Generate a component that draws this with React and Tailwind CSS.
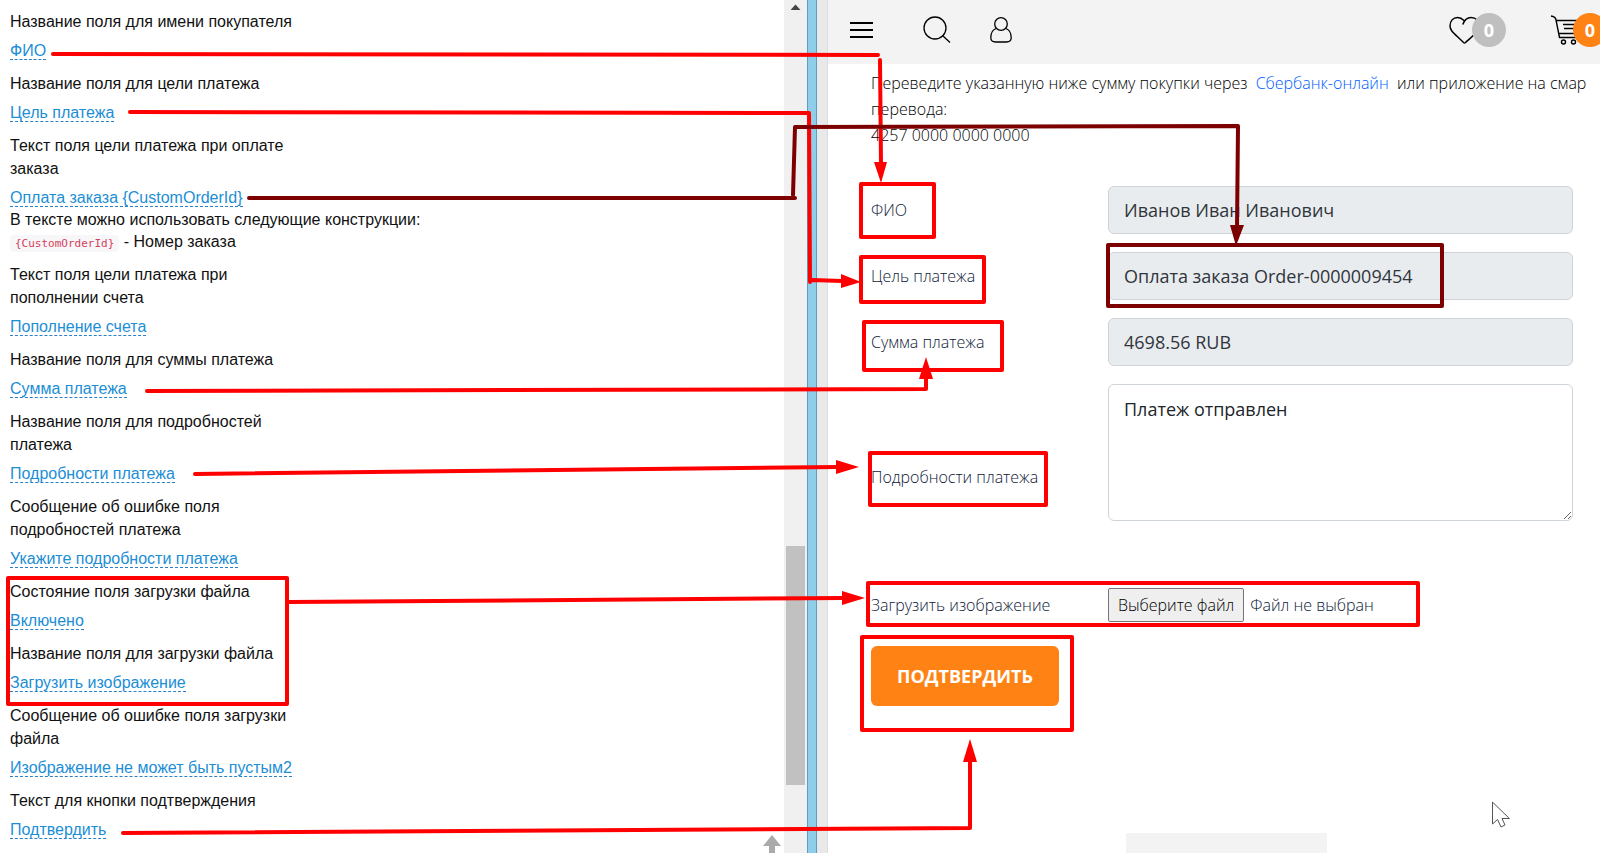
import React, { useRef } from "react"

const settings = [
  { label: "Название поля для имени покупателя", value: "ФИО" },
  { label: "Название поля для цели платежа", value: "Цель платежа" },
  { label: "Текст поля цели платежа при оплате заказа", value: "Оплата заказа {CustomOrderId}", hint: true },
  { label: "Текст поля цели платежа при пополнении счета", value: "Пополнение счета" },
  { label: "Название поля для суммы платежа", value: "Сумма платежа" },
  { label: "Название поля для подробностей платежа", value: "Подробности платежа" },
  { label: "Сообщение об ошибке поля подробностей платежа", value: "Укажите подробности платежа" },
  { label: "Состояние поля загрузки файла", value: "Включено" },
  { label: "Название поля для загрузки файла", value: "Загрузить изображение" },
  { label: "Сообщение об ошибке поля загрузки файла", value: "Изображение не может быть пустым2" },
  { label: "Текст для кнопки подтверждения", value: "Подтвердить" },
]

const SettingsPanel = () => (
  <section className="relative w-[49%] shrink-0 overflow-hidden bg-white pl-[10px] pt-[10px] font-['Liberation_Sans',Arial,sans-serif] text-base leading-[23px] text-[#111]">
    <dl>
      {settings.map(({ label, value, hint }) => (
        <div key={label} className="mb-[10px]">
          <dt className="mb-[6px] w-[300px]">{label}</dt>
          <dd>
            <a href="#" className="border-b border-dashed border-[#2b7fc4] text-[#1b8ed6]">{value}</a>
            {hint && (
              <p className="leading-[22px]">
                В тексте можно использовать следующие конструкции:<br />
                <code className="rounded bg-[#f7f7f9] px-[5px] py-[2px] font-['DejaVu_Sans_Mono',monospace] text-[11px] leading-none text-[#d8405a]">{"{CustomOrderId}"}</code> - Номер заказа
              </p>
            )}
          </dd>
        </div>
      ))}
    </dl>
    <a href="#" aria-label="Наверх" className="absolute bottom-0 right-[2px]">
      <svg width="20" height="18" viewBox="0 0 20 18" fill="#aaa"><path d="M10 0 19 11H13V18H7V11H1Z" /></svg>
    </a>
  </section>
)

const Divider = () => (
  <>
    <div className="relative w-[23px] shrink-0 bg-[#f0f0f0]">
      <svg className="absolute left-[6px] top-[4px]" width="11" height="7" viewBox="0 0 11 7" fill="#444"><path d="M5.500 .5 10.500 6H.5Z" /></svg>
      <div className="absolute left-[2px] top-[64%] h-[28%] w-[19px] bg-[#c1c1c1]" />
    </div>
    <div className="w-[10px] shrink-0 border-x border-[#5a9fc0] bg-[#8fcee9]" />
    <div className="w-[11px] shrink-0 border-r border-[#dcdcdc] bg-[#e9e9e9]" />
  </>
)

const Header = () => (
  <header className="flex h-16 items-center bg-[#f3f3f3] pl-[22px]">
    <nav className="flex items-center pb-1">
      <button type="button" aria-label="Меню">
        <svg width="23" height="16" stroke="#000" strokeWidth="2"><path d="M0 1H23M0 8H23M0 15H23" /></svg>
      </button>
      <button type="button" aria-label="Поиск" className="ml-[50px]">
        <svg width="28" height="28" fill="none" stroke="#000" strokeWidth="1.300"><circle cx="12" cy="12" r="11" /><path d="M19.500 19.500 27 26.500" /></svg>
      </button>
      <button type="button" aria-label="Профиль" className="ml-[39px]">
        <svg width="22" height="26" fill="none" stroke="#000" strokeWidth="1.300"><circle cx="11" cy="7" r="6.300" /><path d="M6 11.500C2 13 .8 17 .8 20.500Q.8 25 5.500 25H16.500Q21.200 25 21.200 20.500C21.200 17 20 13 16 11.500" /></svg>
      </button>
    </nav>
    <div className="-mr-[7px] ml-auto flex items-center gap-11 pb-1">
      <button type="button" aria-label="Избранное" className="flex items-center">
        <svg width="32" height="28" fill="none" stroke="#000" strokeWidth="1.500" strokeLinecap="round">
          <path d="M14 8C15.500 4 18 1.500 22 1.500C27 1.500 30 5 30 10C30 15 26 18 16.500 26.500Q15.500 27.300 14.500 26.500C6 18 1 15 1 10C1 5 4 1.500 8.500 1.500C11 1.500 13 2.500 15 4.500" />
        </svg>
        <span className="-ml-[9px] flex size-[34px] items-center justify-center rounded-full bg-[#bfbfbf] text-lg font-bold text-white">0</span>
      </button>
      <button type="button" aria-label="Корзина" className="flex items-center">
        <svg width="32" height="30" fill="none" stroke="#000" strokeWidth="1.400">
          <path d="M1 1Q5 1.500 5.800 4L9.500 22.500H31M6.500 5.500H31M13 9.500H31M14 13.500H31M9 18.500H31" />
          <circle cx="13.500" cy="27" r="2" />
          <circle cx="23.500" cy="27" r="2" />
        </svg>
        <span className="-ml-[9px] flex size-[34px] items-center justify-center rounded-full bg-[#ff8214] text-lg font-bold text-white">0</span>
      </button>
    </div>
  </header>
)

const fields = [
  { id: "fio", label: "ФИО", value: "Иванов Иван Иванович" },
  { id: "purpose", label: "Цель платежа", value: "Оплата заказа Order-0000009454" },
  { id: "sum", label: "Сумма платежа", value: "4698.56 RUB" },
]

const PaymentForm = () => {
  const fileRef = useRef(null)

  return (
    <form className="mt-[38px] grid grid-cols-[237px_1fr] items-center gap-y-[18px] pr-[27px]">
      {fields.map(({ id, label, value }) => (
        <React.Fragment key={id}>
          <label htmlFor={id} className="text-[#0e1838]">{label}</label>
          <input id={id} readOnly value={value} className="h-12 w-full rounded-md border border-[#ced4da] bg-[#e9ecef] px-[15px] text-lg font-normal text-[#2f353b]" />
        </React.Fragment>
      ))}
      <label htmlFor="details" className="text-[#0e1838]">Подробности платежа</label>
      <div className="h-[186px]">
        <textarea id="details" defaultValue="Платеж отправлен" className="block h-[137px] w-full rounded-md border border-[#ced4da] px-[15px] py-[10px] text-lg font-normal text-[#212529]" />
      </div>
      <label htmlFor="image" className="text-[#0e1838]">Загрузить изображение</label>
      <div className="flex items-center">
        <input id="image" ref={fileRef} type="file" className="sr-only" />
        <button type="button" onClick={() => fileRef.current.click()} className="h-[34px] rounded-[2px] border border-[#767676] bg-[#efefef] px-[9px] text-black">Выберите файл</button>
        <span className="ml-[6px] text-[#0e1838]">Файл не выбран</span>
      </div>
      <button type="submit" className="mt-[6px] h-[60px] w-[188px] rounded-md bg-[#ff8214] text-lg font-bold uppercase text-white">Подтвердить</button>
    </form>
  )
}

// arrows that tie each setting to the field it renames
const Annotations = () => (
  <svg className="pointer-events-none absolute inset-0 h-full w-full" fill="none" strokeWidth="4" strokeLinejoin="round" strokeLinecap="round">
    <g stroke="#f00">
      <path d="M53 54 878 55M880 60 881 165" />
      <path d="M130 112 809 113 810 282M812 280 842 281" />
      <path d="M147 391 926 389V376" />
      <path d="M195 474 838 467" />
      <path d="M289 602 844 598" />
      <path d="M123 833 970 828V760" />
      <rect x="861" y="184" width="73" height="53" />
      <rect x="861" y="257" width="123" height="45" />
      <rect x="864" y="322" width="138" height="48" />
      <rect x="870" y="453" width="176" height="52" />
      <rect x="868" y="583" width="550" height="42" />
      <rect x="862" y="637" width="210" height="93" />
      <rect x="8" y="578" width="279" height="126" />
    </g>
    <g stroke="#7d0000">
      <path d="M249 198H795M793 195 795 127 1238 126 1237 228" />
      <rect x="1108" y="245" width="334" height="61" />
    </g>
    <g fill="#f00">
      <path d="M874 162H887L881 183Z" />
      <path d="M841 274V288L861 282Z" />
      <path d="M919 379H933L926 357Z" />
      <path d="M836 460V474L859 467Z" />
      <path d="M842 591V605L865 598Z" />
      <path d="M963 762H977L970 739Z" />
    </g>
    <path d="M1230 225H1244L1236 246Z" fill="#7d0000" />
    <path d="M1492.500 802.500V824L1497.500 819.500 1501 827 1505 825 1502 818.500H1509Z" fill="#fff" stroke="#555" strokeWidth="1" />
  </svg>
)

export default function App() {
  return (
    <div className="relative flex h-screen overflow-hidden bg-white">
      <SettingsPanel />
      <Divider />
      <main className="flex min-w-0 flex-1 flex-col overflow-hidden font-['Open_Sans',sans-serif] text-base font-[350]">
        <Header />
        <div className="pl-[43px] pt-[6px]">
          <p className="whitespace-nowrap leading-[26px] text-black">
            Переведите указанную ниже сумму покупки через <a href="#" className="mx-1 text-[#0060ff]">Сбербанк-онлайн</a> или приложение на смар<br />
            перевода:<br />
            4257 0000 0000 0000
          </p>
          <PaymentForm />
        </div>
        <footer className="ml-[298px] mt-auto h-5 w-[201px] shrink-0 bg-[#f3f3f3]" />
      </main>
      <Annotations />
    </div>
  )
}
